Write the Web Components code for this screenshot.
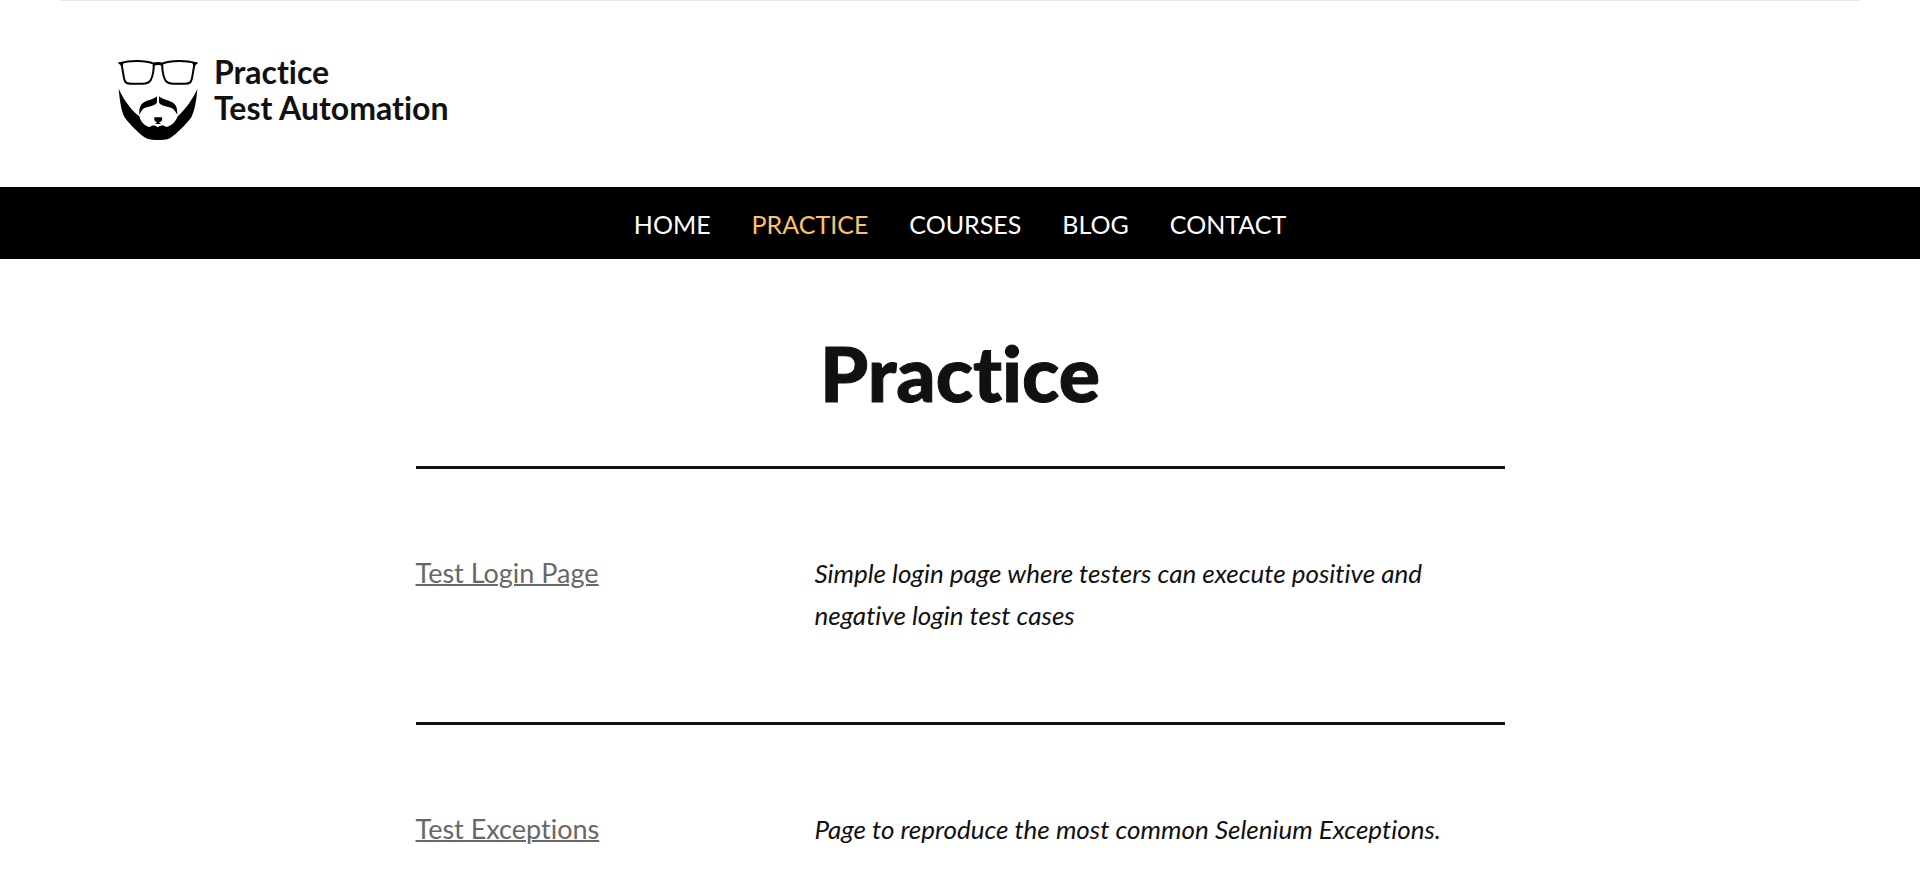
<!DOCTYPE html>
<html lang="en">
<head>
<meta charset="utf-8">
<meta name="viewport" content="width=device-width, initial-scale=1">
<title>Practice | Practice Test Automation</title>
<style>
  body { margin: 0; background: #fff; color: #111; font-family: Lato, "Open Sans", sans-serif; font-size: 27px; line-height: 42px; font-variant-ligatures: none; }
</style>
</head>
<body>
<practice-page>
  <site-header slot="header"></site-header>
  <site-nav slot="nav">
    <nav-item href="#home">HOME</nav-item>
    <nav-item href="#practice" current>PRACTICE</nav-item>
    <nav-item href="#courses">COURSES</nav-item>
    <nav-item href="#blog">BLOG</nav-item>
    <nav-item href="#contact">CONTACT</nav-item>
  </site-nav>
  <page-title>Practice</page-title>
  <practice-entry href="#login" label="Test Login Page">Simple login page where testers can execute positive and negative login test cases</practice-entry>
  <practice-entry href="#exceptions" label="Test Exceptions">Page to reproduce the most common Selenium Exceptions.</practice-entry>
</practice-page>

<script>
class BaseElement extends HTMLElement {
  constructor() {
    super();
    this.attachShadow({ mode: "open" }).innerHTML = this.constructor.markup;
  }
}

customElements.define("practice-page", class extends BaseElement {
  static markup = `
    <style>
      :host { display: block; }
      .top { height: 1px; margin: 0 60px; background: #e8e8e8; }
      main { box-sizing: border-box; width: calc(100% - 48px); max-width: 1089px; margin: 0 auto; }
    </style>
    <div class="top"></div>
    <slot name="header"></slot>
    <slot name="nav"></slot>
    <main><slot></slot></main>`;
});

customElements.define("site-header", class extends BaseElement {
  static markup = `
    <style>
      :host { display: block; }
      header { padding: 53px 118px 43px; }
      a { display: inline-flex; gap: 16px; color: #111; text-decoration: none; font-weight: 700; font-size: 32px; line-height: 36px; vertical-align: top; }
      svg { display: block; width: 80px; height: 82px; padding: 5px 0 3px; }
      .name { display: block; }
    </style>
    <header>
      <a href="#home">
        <svg viewBox="40 28 240 246" aria-hidden="true">
          <g fill="none" stroke="#000" stroke-width="6" stroke-linejoin="round">
            <path d="M50 40C72 32 122 31 147 42C148 62 144 79 139 90C134 99 127 102 113 102L78 102C65 102 61 99 58 86L51 44"/>
            <path d="M270 40C248 32 198 31 173 42C172 62 176 79 181 90C186 99 193 102 207 102L242 102C255 102 259 99 262 86L269 44"/>
            <path d="M145 43Q160 37 175 43"/>
          </g>
          <path d="M41 38L58 36L54 48L48 48Q48 43 42 43Z M279 38L262 36L266 48L272 48Q272 43 278 43Z M145 41Q160 38 175 41L173 50Q160 42 147 50Z"/>
          <path d="M42 117C54 144 75 177 104 200C108 216 119 229 134 232C143 226 151 225 159 233C168 225 177 226 186 232C203 227 213 216 219 200C244 178 264 148 278 118C275 155 270 182 260 203C250 217 211 260 191 268C174 272 143 272 128 267C109 259 68 216 59 201C49 180 45 149 42 117Z"/>
          <path d="M157 140C148 149 132 151 119 157C106 164 103 178 104 195C112 184 111 176 129 172C145 168 158 165 157 155Z"/>
          <path d="M163 140C172 149 188 151 201 157C216 164 218 178 218 195C210 184 209 176 191 172C175 168 162 165 163 155Z"/>
          <path d="M149 203L172 203Q175 216 163 218L169 223L152 223L157 218Q147 215 149 203Z"/>
        </svg>
        <span><span class="name">Practice</span><span class="name">Test Automation</span></span>
      </a>
    </header>`;
});

customElements.define("site-nav", class extends BaseElement {
  static markup = `
    <style>
      :host { display: block; background: #000; color: #fff; }
      nav { display: flex; flex-wrap: wrap; justify-content: center; gap: 0 41px; padding: 19px 24px 17px; font-size: 25px; line-height: 36px; }
    </style>
    <nav aria-label="Main"><slot></slot></nav>`;
});

customElements.define("nav-item", class extends BaseElement {
  static markup = `
    <style>
      :host { display: block; }
      a { color: inherit; text-decoration: none; }
      :host([current]) a { color: #ffc06c; }
    </style>
    <a><slot></slot></a>`;
  connectedCallback() {
    this.shadowRoot.querySelector("a").href = this.getAttribute("href");
  }
});

customElements.define("page-title", class extends BaseElement {
  static markup = `
    <style>
      :host { display: block; }
      h1 { margin: 0; padding: 65px 0 46px; font-size: 77px; line-height: 96px; font-weight: 900; text-align: center; -webkit-text-stroke: 1px #111; }
    </style>
    <h1><slot></slot></h1>`;
});

customElements.define("practice-entry", class extends BaseElement {
  static markup = `
    <style>
      :host { display: block; border-top: 3px solid #111; }
      .row { display: grid; grid-template-columns: 33.33% 1fr; column-gap: 36px; padding: 83px 0 86px; }
      :host(:last-of-type) .row { padding-bottom: 0; }
      p { margin: 0; }
      a { color: #686868; text-decoration: underline; text-decoration-thickness: 2px; }
      .text { font-style: italic; font-size: 26px; }
    </style>
    <div class="row">
      <p><a></a></p>
      <p class="text"><slot></slot></p>
    </div>`;
  connectedCallback() {
    const a = this.shadowRoot.querySelector("a");
    a.href = this.getAttribute("href");
    a.textContent = this.getAttribute("label");
  }
});
</script>
</body>
</html>
